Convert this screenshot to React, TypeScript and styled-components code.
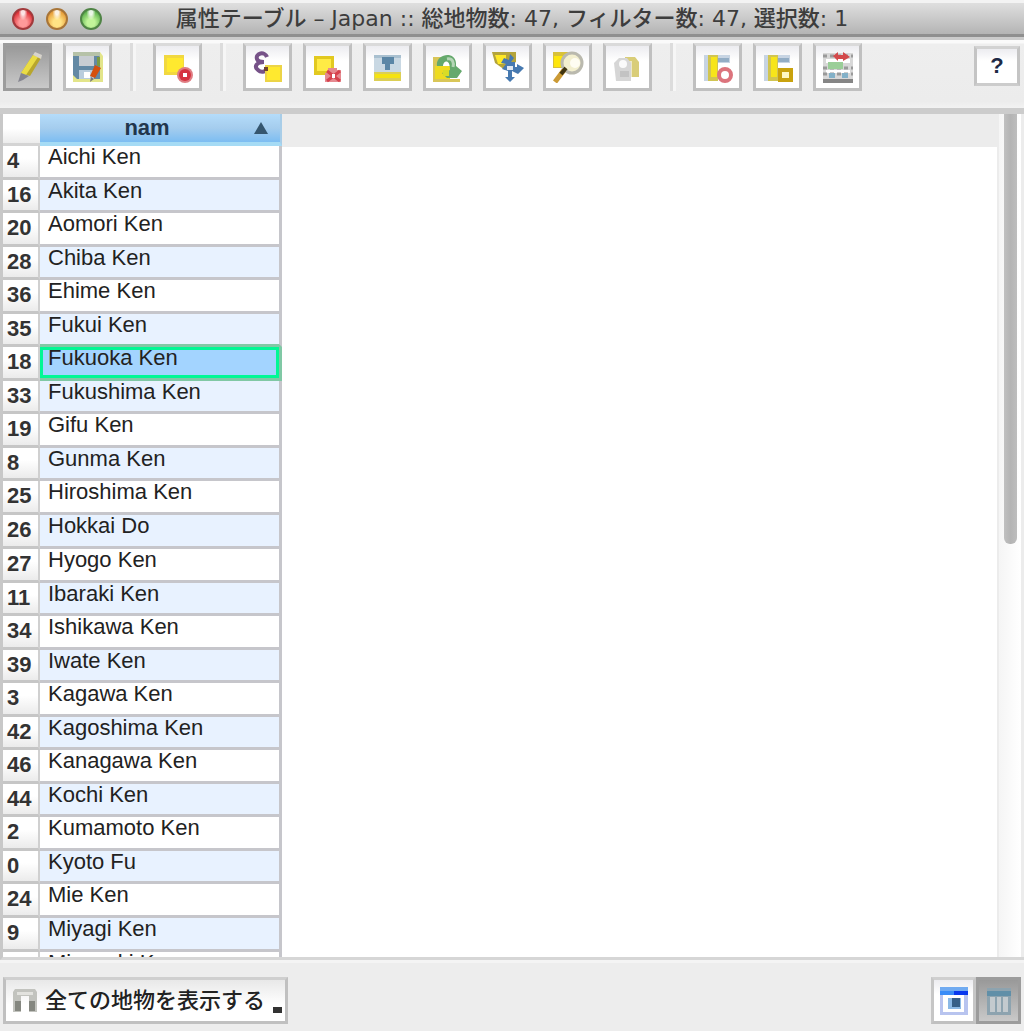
import React, { useState } from "react";
import styled, { createGlobalStyle, css } from "styled-components";

const GlobalStyle = createGlobalStyle`
  * { box-sizing: border-box; }
  html, body { margin: 0; background: #ededed; }
  body, button { font-family: "Liberation Sans", "Noto Sans CJK JP", sans-serif; }
`;

const Window = styled.div`
  display: flex;
  flex-direction: column;
  height: 100vh;
  overflow: hidden;
  background: #ededed;
  color: #222;
`;

const TitleBar = styled.header`
  position: relative;
  display: flex;
  align-items: center;
  justify-content: center;
  flex: none;
  height: 37px;
  border-top: 3px solid #f3f3f3;
  border-bottom: 3px solid #8f8f8f;
  background: linear-gradient(#dfdfdf, #b4b4b4);
`;

const Lights = styled.div`
  position: absolute;
  left: 12px;
  top: 5px;
  display: flex;
  gap: 12px;
`;

const Light = styled.button<{ $edge: string; $mid: string; $glow: string }>`
  width: 22px;
  height: 22px;
  padding: 0;
  border: 2px solid ${(p) => p.$edge};
  border-radius: 50%;
  background:
    radial-gradient(ellipse at 50% 12%, rgba(255, 255, 255, 0.85) 0 12%, transparent 36%),
    radial-gradient(circle at 50% 70%, ${(p) => p.$glow} 0 25%, ${(p) => p.$mid} 75%);
`;

const Title = styled.h1`
  margin: 0;
  font: 500 22px/30px "DejaVu Sans", "Noto Sans CJK JP", sans-serif;
  color: #3d3d3d;
  white-space: nowrap;
`;

const Toolbar = styled.div`
  display: flex;
  align-items: flex-start;
  gap: 11px;
  flex: none;
  height: 77px;
  padding: 3px 4px 0 3px;
  border-top: 3px solid #cbcbcb;
  border-bottom: 6px solid #cccccc;
  background: linear-gradient(#fafafa 0 3px, #eeeeee 4px, #ececec 90%, #f2f2f2);
`;

const pressed = css`
  border-color: #9c9c9c;
  background: linear-gradient(#999, #c9c9c9);
`;

const ToolButton = styled.button<{ $pressed?: boolean }>`
  display: flex;
  align-items: center;
  justify-content: center;
  flex: none;
  width: 49px;
  height: 48px;
  padding: 0;
  border: 3px solid #c0c0c0;
  border-top-color: #dadada;
  background: linear-gradient(#ececf0, #ffffff 35%);
  ${(p) => p.$pressed && pressed}
`;

const Separator = styled.div`
  flex: none;
  width: 3px;
  height: 48px;
  margin: 0 9px 0 7px;
  background: #dcdcdc;
  box-shadow: 3px 0 #f6f6f6;
`;

const HelpButton = styled(ToolButton)`
  width: 46px;
  height: 40px;
  margin: 3px 0 0 auto;
  border-color: #d2d2d2 #c4c4c4 #cccccc;
  font-size: 22px;
  font-weight: 700;
  line-height: 24px;
  color: #1d2a45;
`;

const Body = styled.main`
  display: flex;
  flex: 1;
  min-height: 0;
  border-left: 3px solid #c8c8c8;
  border-bottom: 3px solid #d6d6d6;
  background: #fff;
  overflow: hidden;
`;

const TableArea = styled.div`
  flex: 1;
  min-width: 0;
  overflow: hidden;
  background: linear-gradient(#ececec, #ececec) 0 0 / 100% 33px no-repeat;
`;

const Table = styled.table`
  width: 279px;
  table-layout: fixed;
  border-collapse: separate;
  border-spacing: 0;
  font-size: 22px;
  line-height: 22px;
`;

const Corner = styled.th`
  width: 37px;
  height: 32px;
  padding: 0;
  border-bottom: 3px solid #d4d4d4;
  background: linear-gradient(#fff 50%, #ececec);
`;

const ColumnHead = styled.th`
  padding: 0;
  border-right: 2px solid #a8cde8;
  border-bottom: 4px solid #a5dbf5;
  background: linear-gradient(#b4dcfa, #a5cdee 50%, #7cbdf2);
`;

const SortButton = styled.button`
  display: flex;
  align-items: center;
  width: 100%;
  height: 28px;
  padding: 0 12px 0 0;
  border: 0;
  background: none;
  font-size: 22px;
  font-weight: 700;
  color: #22364c;

  span { flex: 1; }
`;

const Row = styled.tr<{ $selected: boolean; $beforeSelected: boolean }>`
  height: 34px;
  &:nth-child(even) { height: 33px; }
  &:nth-child(12n) { height: 34px; }

  td {
    background: #fff;
    ${(p) => p.$beforeSelected && "border-bottom-color: #80c8a5;"}
  }
  &:nth-child(even) td { background: #e8f2ff; }

  ${(p) =>
    p.$selected &&
    css`
      && td {
        position: relative;
        background: #a3d4ff;
        border-bottom-color: #80c8a5;
        border-right-color: #80c8a5;
      }
      && td::after {
        content: "";
        position: absolute;
        inset: 0;
        border: 3px solid #00f795;
      }
    `}
`;

const RowNumber = styled.th`
  padding: 4px 0 0 4px;
  border-right: 2px solid #d0d0d0;
  border-bottom: 3px solid #c6c6c6;
  background: linear-gradient(#fff 40%, #ebebeb);
  text-align: left;
  vertical-align: top;
  color: #333;
`;

const Cell = styled.td`
  padding: 0 0 0 8px;
  border-right: 3px solid #c6c6cb;
  border-bottom: 3px solid #c6c6cb;
  vertical-align: top;
  white-space: nowrap;
`;

const ScrollTrack = styled.div`
  flex: none;
  width: 27px;
  padding: 0 5px;
  border-left: 2px solid #ececec;
  border-right: 3px solid #ececec;
  background: linear-gradient(90deg, #f5f5f5, #fff);
`;

const ScrollThumb = styled.div`
  width: 13px;
  height: 51%;
  border-radius: 0 0 6px 6px;
  background: linear-gradient(90deg, #c0c0c0, #b4b4b4 50%, #bdbdbd);
`;

const Footer = styled.footer`
  display: flex;
  align-items: flex-start;
  justify-content: space-between;
  flex: none;
  height: 71px;
  padding: 14px 3px 0;
  border-top: 3px solid #f4f4f4;
`;

const FilterButton = styled.button`
  display: flex;
  align-items: center;
  gap: 8px;
  height: 47px;
  padding: 0 3px 0 7px;
  border: 3px solid #c0c0c0;
  border-top-color: #cfcfcf;
  background: linear-gradient(#e8e8e8, #fff 60%);
  font-size: 22px;
  line-height: 24px;
  font-weight: 500;
  color: #222;
`;

const MenuMark = styled.i`
  align-self: flex-end;
  width: 9px;
  height: 6px;
  margin-bottom: 8px;
  background: #333;
`;

const ViewSwitch = styled.div`
  display: flex;
`;

const ViewButton = styled(ToolButton)`
  width: 45px;
  height: 47px;
  border-color: #cfcfcf #c6c6c6 #c0c0c0;
  ${(p) => p.$pressed && pressed}
`;

const Icon = ({ children }: { children: React.ReactNode }) => (
  <svg width="32" height="32" viewBox="-1 -1 32 32" aria-hidden="true">{children}</svg>
);

const PencilIcon = () => (
  <Icon>
    <path d="M20 3 28 6 17 24 8 21Z" fill="#b8a62c" />
    <path d="M20 3 25 5 13 23 8 21Z" fill="#eadc45" />
    <path d="m20 3 2-3 7 3-1 4Z" fill="#d8d4cc" />
    <path d="m8 21 8 3-6 4-5 2Z" fill="#858590" />
  </Icon>
);

const SaveIcon = () => (
  <Icon>
    <path d="M0 0h27l3 4v26H0Z" fill="#e3e58a" />
    <path d="M0 1h24l3 4v22H4l-4-4Z" fill="#6389a4" />
    <path d="M0 0h27v4H0Z" fill="#b6c2a8" />
    <path d="M6 4h15v10H6Z" fill="#c8cdd2" />
    <path d="M6 18h15v9H6Z" fill="#b9cddd" />
    <path d="M11 20h6v6h-6Z" fill="#fff" />
    <path d="m22 13 6 3-6 10-5-2Z" fill="#d4500e" />
    <path d="m18 25 3 2-4 3Z" fill="#777" />
    <path d="M24 5h3v9h-3Z" fill="#7b9b44" />
  </Icon>
);

const DeselectIcon = () => (
  <Icon>
    <path d="M1 3h20v20H1Z" fill="#f1d840" />
    <path d="M4 6h16v14H4Z" fill="#ffe92f" />
    <circle cx="22" cy="23" r="8" fill="#df7d83" />
    <circle cx="22" cy="23" r="6" fill="#d63340" />
    <path d="M20 21h4v4h-4Z" fill="#fff" />
  </Icon>
);

const ExpressionIcon = () => (
  <Icon>
    <path d="M14 5C12-1 2 1 4 7c1 3 4 3 7 3-8 0-10 5-6 8 3 3 7 2 10-1" fill="none" stroke="#765288" strokeWidth="4" />
    <path d="M12 13h17v17H12Z" fill="#ecd447" />
    <path d="M14 15h13v13H14Z" fill="#ffe92f" />
    <path d="M11 15h4v4h-4Z" fill="#71452e" />
  </Icon>
);

const DeleteIcon = () => (
  <Icon>
    <path d="M1 4h20v19H1Z" fill="#e2c920" />
    <path d="M4 7h14v12H4Z" fill="#ffeb45" />
    <path d="M15 16h9v2h4v12H12V21h3Z" fill="#e58a90" />
    <path d="m14 19 13 10m0-10L14 29" stroke="#d6424d" strokeWidth="3" />
    <path d="M19 22h3v4h-3Z" fill="#fff" />
  </Icon>
);

const MoveTopIcon = () => (
  <Icon>
    <path d="M1 3h27v17H1Z" fill="#c9d8e3" />
    <path d="M1 3h27v3H1Z" fill="#a9c0d0" />
    <path d="M9 5h12v7h-4v6h-5v-6H9Z" fill="#5b86a6" />
    <path d="M1 20h27v9H1Z" fill="#dccf55" />
    <path d="M2 22h25v4H2Z" fill="#f5e312" />
  </Icon>
);

const InvertIcon = () => (
  <Icon>
    <path d="M0 5h8v8l-4 2v12h23v3H0Z" fill="#d9c658" />
    <path d="M2 14h15v13H2Z" fill="#eedb20" />
    <path d="M4 14C2 2 22-2 23 11v3l6 5-5 7H14l-5-5 8-3c0-12-7-9-7-4Z" fill="#65a96d" />
    <path d="M14 7c6-1 7 4 6 8" stroke="#b5d6b7" strokeWidth="3" fill="none" />
    <path d="M10 18h6v6h-6Z" fill="#d9dc26" />
  </Icon>
);

const PanIcon = () => (
  <Icon>
    <path d="M-1 0h24v10l-11 8L2 11Z" fill="#b4a43b" />
    <path d="M2 3h11v9H5Z" fill="#ffe926" />
    <path d="m17 2 4 4-3 4h4v5h2v-3l7 4-6 6-6-3v6h3l-5 5-5-5h3v-6l-6-2 4-5-5-1 3-5 5 2Z" fill="#4679b0" />
    <path d="M14 14h6v4h-6Z" fill="#dfe8f2" />
  </Icon>
);

const ZoomIcon = () => (
  <Icon>
    <path d="M0 0h15v16H0Z" fill="#d8c13a" />
    <path d="M1 4h9v11H1Z" fill="#fee60c" />
    <circle cx="19" cy="11" r="10" fill="#f3efcf" stroke="#bab9ae" strokeWidth="3" />
    <circle cx="22" cy="11" r="5" fill="#fffdf2" />
    <path d="m11 18-9 12" stroke="#cb9a35" strokeWidth="5" />
    <path d="m13 16-5 6" stroke="#3f3411" strokeWidth="4" />
  </Icon>
);

const CopyIcon = () => (
  <Icon>
    <path d="M12 5h10l4 5v15H12Z" fill="#d9cd78" />
    <path d="M12 9h7v16h-7Z" fill="#ece7c9" />
    <path d="M1 11 6 6h8l4 5v18H3Z" fill="#d6d6d6" />
    <circle cx="10" cy="12" r="4" fill="#fafafa" />
    <path d="M7 19h9v6H7Z" fill="#c3c3c3" />
  </Icon>
);

const Columns = () => (
  <g>
    <path d="M1 3h26v8H14v18H1Z" fill="#c7d4e3" />
    <path d="M15 6h11v4H15Z" fill="#93adc5" />
    <path d="M5 3h10v26H5Z" fill="#d1c552" />
    <path d="M8 5h6v20H8Z" fill="#f7e51a" />
  </g>
);

const DeleteColumnIcon = () => (
  <Icon>
    <Columns />
    <circle cx="22" cy="23" r="6" fill="#fff" stroke="#dc747d" strokeWidth="4" />
  </Icon>
);

const NewColumnIcon = () => (
  <Icon>
    <Columns />
    <path d="M17 18h11v10H17Z" fill="#fff8c2" stroke="#c9a20e" strokeWidth="4" />
  </Icon>
);

const CalculatorIcon = () => (
  <Icon>
    <path d="M0 1h30v29H0Z" fill="#d8d8d8" />
    <path d="M3 7h24v4H3Zm0 11h24v3H3Z" fill="#fff" />
    <path d="M0 4h30M0 16h30M0 22h30" stroke="#9a9a9a" strokeWidth="3" strokeDasharray="4 3" />
    <path d="m10 4 5-4v3h5V0l7 5-7 4V7h-5v2Z" fill="#d34a4c" />
    <path d="M5 10h15v7H5Z" fill="#9bce98" />
    <path d="M6 21h6v5H6Zm13 0h6v5h-6Z" fill="#83b1c8" />
    <path d="M0 27h30v4H0Z" fill="#858585" />
  </Icon>
);

const FilterIcon = () => (
  <svg width="24" height="24" viewBox="0 0 24 24" aria-hidden="true">
    <path d="M2 0h20l2 3v20h-8V7H8v16H0V3Z" fill="#c2c3be" />
    <path d="M2 12h6v10H2Zm14 0h6v10h-6Z" fill="#858780" />
    <path d="M4 3h16v3H4Z" fill="#e2e2de" />
  </svg>
);

const FormIcon = () => (
  <Icon>
    <path d="M1 1h28v28H1Z" fill="#b8c4ef" />
    <path d="M4 9h21v17H4Z" fill="#fff" />
    <path d="M1 1h28v4H1Z" fill="#70aaf1" />
    <path d="M1 5h14v4H1Z" fill="#398cf7" />
    <path d="M15 5h14v4H15Z" fill="#0838ee" />
    <path d="M9 12h13v11H9Z" fill="#8bb9e6" />
    <path d="M13 12h8v9h-8Z" fill="#365f88" />
  </Icon>
);

const TableIcon = () => (
  <Icon>
    <path d="M3 2h24v27H3Z" fill="#8da3af" />
    <path d="M3 5h24v5H3Z" fill="#608fa8" />
    <path d="M6 11h5v15H6Zm7 0h4v15h-4Zm6 0h5v15h-5Z" fill="#c3cace" />
  </Icon>
);

const toolGroups = [
  [["編集モード切替", PencilIcon], ["編集内容を保存", SaveIcon]],
  [["選択を解除", DeselectIcon]],
  [
    ["式による選択", ExpressionIcon],
    ["選択地物を削除", DeleteIcon],
    ["選択を先頭に移動", MoveTopIcon],
    ["選択の反転", InvertIcon],
    ["選択にパン", PanIcon],
    ["選択にズーム", ZoomIcon],
    ["選択行をコピー", CopyIcon],
  ],
  [["カラム削除", DeleteColumnIcon], ["新規カラム", NewColumnIcon], ["フィールド計算機", CalculatorIcon]],
] as [string, React.FC][][];

const rows: [number | null, string][] = [
  [4, "Aichi Ken"], [16, "Akita Ken"], [20, "Aomori Ken"], [28, "Chiba Ken"],
  [36, "Ehime Ken"], [35, "Fukui Ken"], [18, "Fukuoka Ken"], [33, "Fukushima Ken"],
  [19, "Gifu Ken"], [8, "Gunma Ken"], [25, "Hiroshima Ken"], [26, "Hokkai Do"],
  [27, "Hyogo Ken"], [11, "Ibaraki Ken"], [34, "Ishikawa Ken"], [39, "Iwate Ken"],
  [3, "Kagawa Ken"], [42, "Kagoshima Ken"], [46, "Kanagawa Ken"], [44, "Kochi Ken"],
  [2, "Kumamoto Ken"], [0, "Kyoto Fu"], [24, "Mie Ken"], [9, "Miyagi Ken"],
  [null, "Miyazaki Ken"],
];

export default function App() {
  const [selected, setSelected] = useState(6);

  return (
    <Window>
      <GlobalStyle />
      <TitleBar>
        <Lights>
          <Light aria-label="閉じる" $edge="#a23a3c" $mid="#dc2b32" $glow="#ff9a9a" />
          <Light aria-label="しまう" $edge="#a87538" $mid="#e69a35" $glow="#ffe384" />
          <Light aria-label="拡大" $edge="#4f8445" $mid="#5bb04b" $glow="#c2f59a" />
        </Lights>
        <Title>属性テーブル – Japan :: 総地物数: 47, フィルター数: 47, 選択数: 1</Title>
      </TitleBar>

      <Toolbar role="toolbar">
        {toolGroups.map((group, g) => (
          <React.Fragment key={g}>
            {g > 0 && <Separator />}
            {group.map(([label, Glyph], i) => (
              <ToolButton key={label} aria-label={label} $pressed={g === 0 && i === 0}>
                <Glyph />
              </ToolButton>
            ))}
          </React.Fragment>
        ))}
        <HelpButton>?</HelpButton>
      </Toolbar>

      <Body>
        <TableArea>
          <Table>
            <thead>
              <tr>
                <Corner />
                <ColumnHead scope="col">
                  <SortButton>
                    <span>nam</span>
                    <svg width="14" height="12" viewBox="0 0 14 12" aria-hidden="true">
                      <path d="M7 0 14 12H0Z" fill="#35566f" />
                    </svg>
                  </SortButton>
                </ColumnHead>
              </tr>
            </thead>
            <tbody>
              {rows.map(([id, name], i) => (
                <Row
                  key={name}
                  $selected={i === selected}
                  $beforeSelected={i === selected - 1}
                  onClick={() => setSelected(i)}
                >
                  <RowNumber scope="row">{id}</RowNumber>
                  <Cell>{name}</Cell>
                </Row>
              ))}
            </tbody>
          </Table>
        </TableArea>
        <ScrollTrack>
          <ScrollThumb />
        </ScrollTrack>
      </Body>

      <Footer>
        <FilterButton aria-haspopup="menu">
          <FilterIcon />
          全ての地物を表示する
          <MenuMark />
        </FilterButton>
        <ViewSwitch>
          <ViewButton aria-label="フォームビュー"><FormIcon /></ViewButton>
          <ViewButton aria-label="テーブルビュー" $pressed><TableIcon /></ViewButton>
        </ViewSwitch>
      </Footer>
    </Window>
  );
}
